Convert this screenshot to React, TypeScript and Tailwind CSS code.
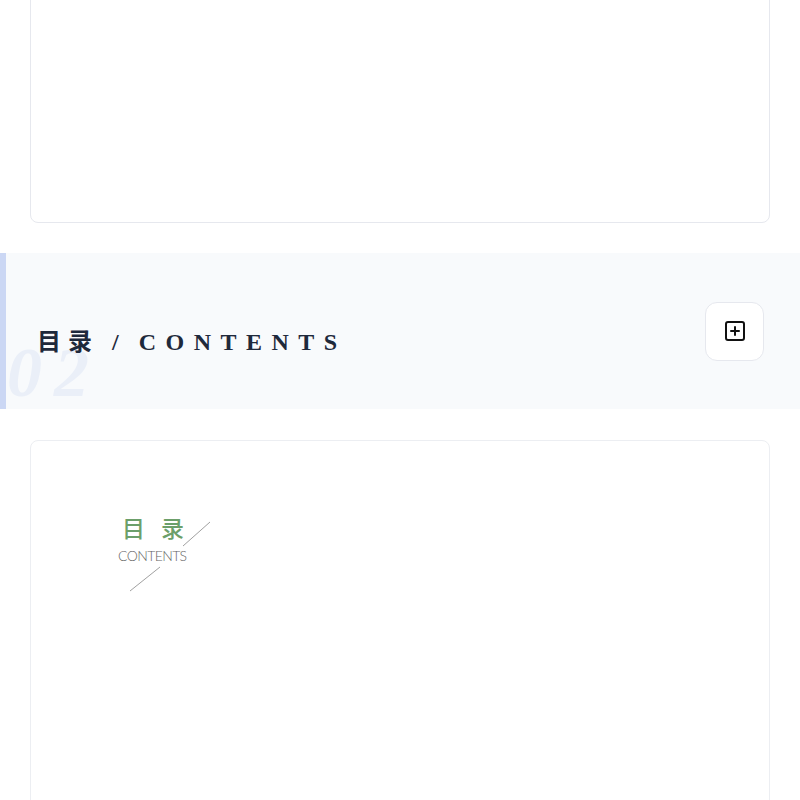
import { SquarePlus } from "lucide-react";

function ContentsArt() {
  return (
    <div className="relative ml-[87px] mt-[72px] h-[82px] w-[100px]">
      <div className="absolute left-[4px] top-0 text-[23px] leading-[28px] tracking-[16px] text-[#6c9f6a] font-medium [font-family:'Noto_Sans_CJK_SC',sans-serif]">
        目录
      </div>
      <div className="absolute left-0 top-[35px] text-[14px] leading-[16px] tracking-[-0.6px] text-[#666] font-light [font-family:Lato,'Liberation_Sans',sans-serif]">
        CONTENTS
      </div>
      <svg className="absolute left-0 top-0" width="100" height="82" viewBox="0 0 100 82">
        <line x1="65" y1="33" x2="92" y2="9" stroke="#a0a0a0" strokeWidth="1" />
        <line x1="12" y1="78" x2="42" y2="54" stroke="#a0a0a0" strokeWidth="1" />
      </svg>
    </div>
  );
}

export default function App() {
  return (
    <div className="h-[800px] overflow-hidden bg-white">
      <div className="px-[30px]">
        <div className="-mt-[20px] h-[243px] rounded-lg border border-[#e6e8ee] bg-white" />
      </div>

      <div className="mt-[30px] flex h-[156px] items-center justify-between border-l-[6px] border-[#cbd7f4] bg-[#f8fafc] pl-[31px] pr-[36px]">
        <div className="relative pt-[22px]">
          <span className="pointer-events-none absolute -left-[30px] top-[36px] select-none text-[70px] font-bold italic leading-none tracking-[12px] text-[#eaeff8] [font-family:'Liberation_Serif',serif]">
            02
          </span>
          <h2 className="relative text-[24px] font-bold tracking-[7px] text-[#1e293b] [font-family:'Liberation_Serif','Noto_Sans_CJK_SC',serif]">
            目录 / <span className="tracking-[9.5px]">CONTENTS</span>
          </h2>
        </div>
        <button className="flex h-[59px] w-[59px] items-center justify-center rounded-xl border border-[#e6e8ee] bg-white">
          <SquarePlus className="h-6 w-6 text-[#111]" strokeWidth={2} />
        </button>
      </div>

      <div className="mt-[31px] px-[30px]">
        <div className="h-[400px] rounded-lg border border-[#eceef2] bg-white">
          <ContentsArt />
        </div>
      </div>
    </div>
  );
}
